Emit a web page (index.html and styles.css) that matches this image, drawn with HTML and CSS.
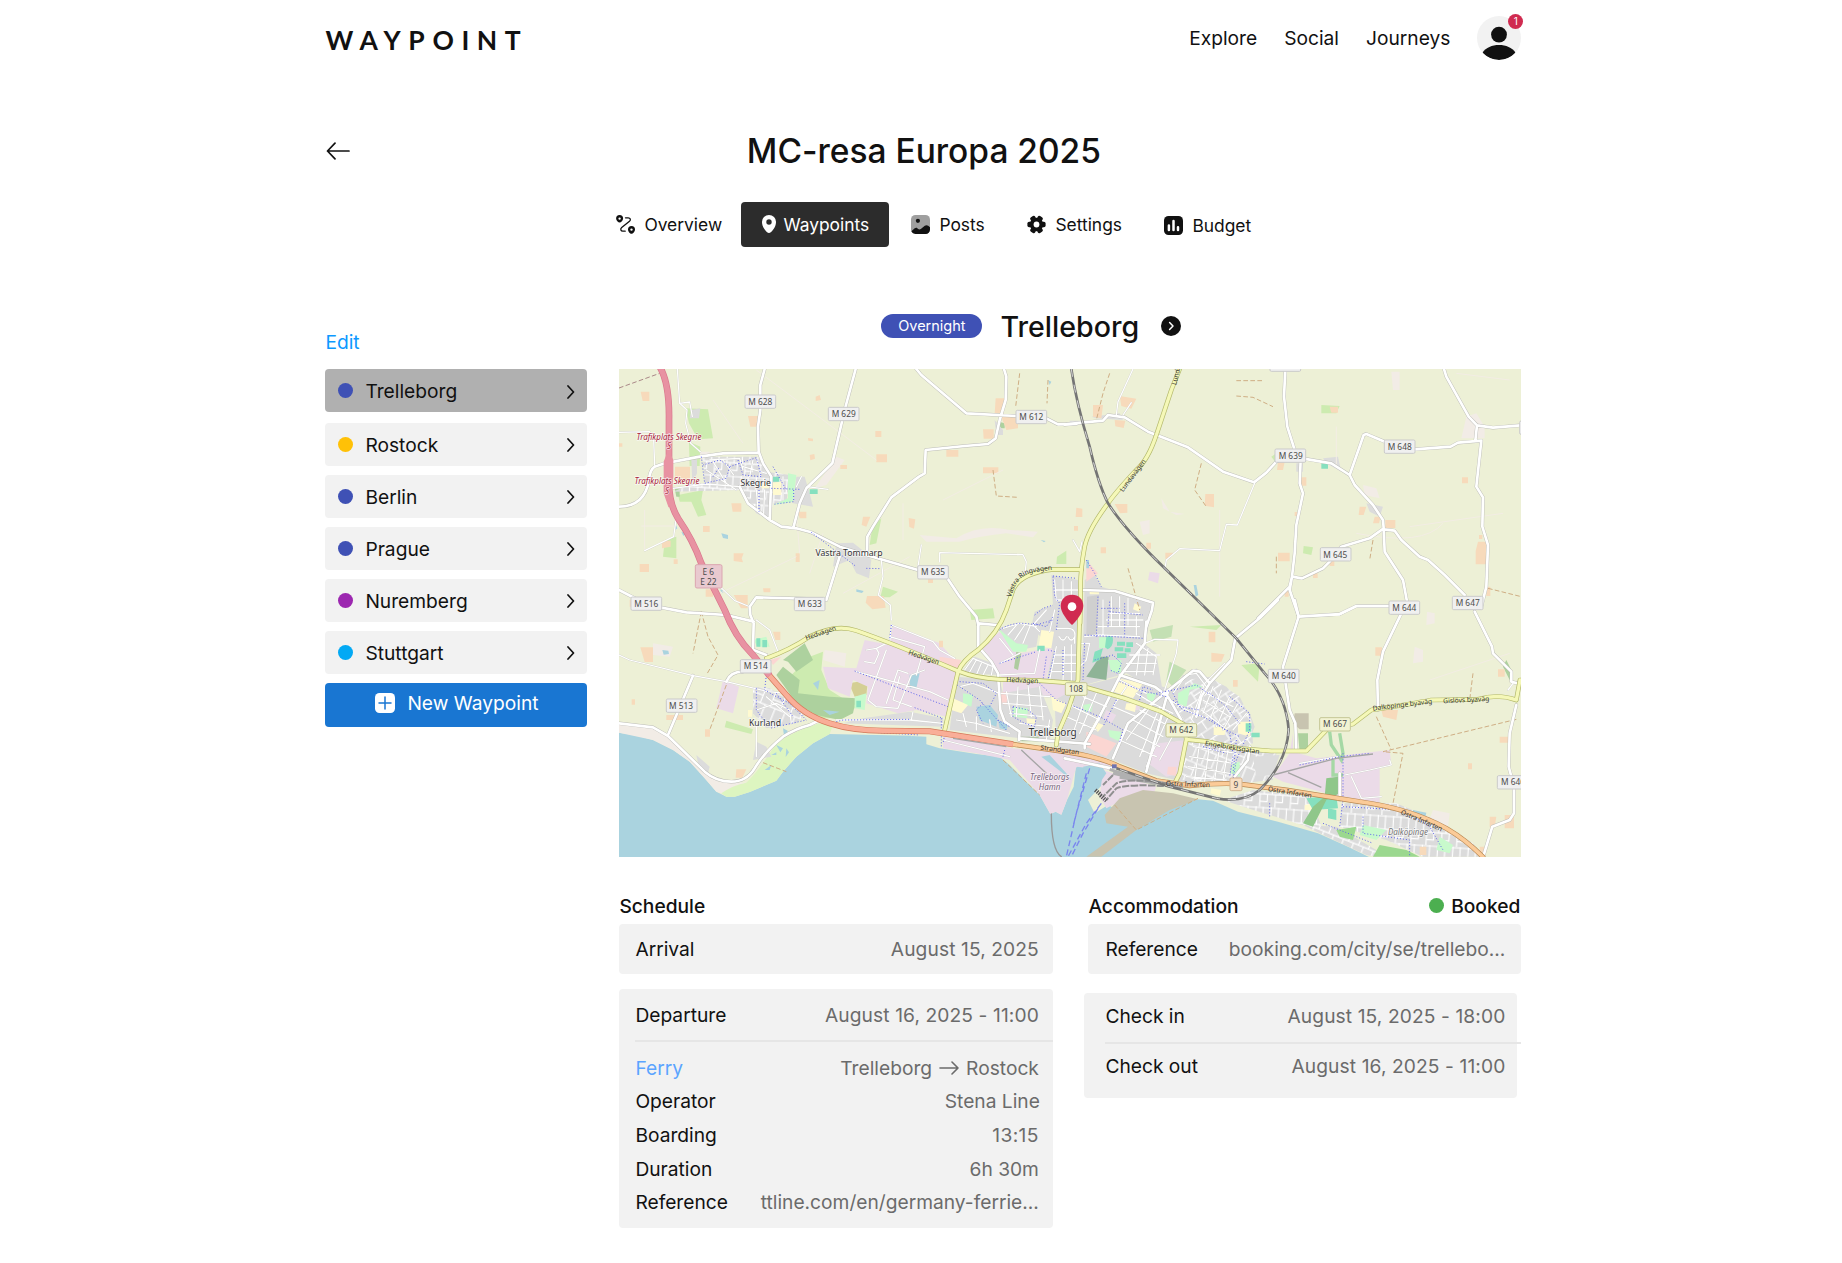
FILE: index.html
```html
<!DOCTYPE html>
<html lang="en">
<head>
<meta charset="utf-8">
<title>Waypoint – MC-resa Europa 2025</title>
<link rel="stylesheet" href="styles.css">
</head>
<body>
<div class="page">
  <header class="topbar">
    <a class="logo">WAYPOINT</a>
    <nav class="nav">
      <a>Explore</a><a>Social</a><a>Journeys</a>
      <div class="avatar">
        <svg viewBox="0 0 44 44" width="44" height="44">
          <defs><clipPath id="av"><circle cx="22" cy="22" r="22"/></clipPath></defs>
          <circle cx="22" cy="22" r="22" fill="#f2f2f2"/>
          <circle cx="22" cy="18.6" r="7.9" fill="#111"/>
          <path clip-path="url(#av)" d="M5.5 36.6C9 31.500 15 29 22 29s13 2.500 16.500 7.600C35 41.500 29 44 22 44S9 41.500 5.500 36.600z" fill="#111"/>
        </svg>
        <span class="badge">1</span>
      </div>
    </nav>
  </header>

  <div class="title-row">
    <svg class="back" viewBox="0 0 24 18" width="24" height="18" fill="none" stroke="#111" stroke-width="1.7" stroke-linecap="round" stroke-linejoin="round"><path d="M23 9H1.500M9 1.200L1.500 9 9 16.800"/></svg>
    <h1>MC-resa Europa 2025</h1>
  </div>

  <nav class="tabs">
    <a class="tab t-overview">
      <svg viewBox="0 0 19 19" width="19" height="19"><path d="M9.500 2.800h2.700c2.200 0 2.900 2 1.300 3.400L5.700 12.600c-1.700 1.500-.9 3.600 1.200 3.600h2.300" fill="none" stroke="#111" stroke-width="1.300" stroke-linecap="round"/><path fill-rule="evenodd" fill="#111" d="M3.600 0a3.500 3.500 0 0 1 3.500 3.500C7.100 5.600 5 7.600 3.600 7.600S.1 5.600.1 3.500A3.500 3.500 0 0 1 3.600 0zm0 2.400a1.200 1.200 0 1 0 0 2.400 1.200 1.200 0 0 0 0-2.400zM15.500 11a3.500 3.500 0 0 1 3.500 3.500c0 2.100-2.100 4.300-3.500 4.300S12 16.600 12 14.500a3.500 3.500 0 0 1 3.500-3.500zm0 2.400a1.200 1.200 0 1 0 0 2.400 1.200 1.200 0 0 0 0-2.400z"/></svg>
      <span>Overview</span></a>
    <a class="tab t-waypoints">
      <svg viewBox="0 0 14 18" width="14" height="18"><path fill-rule="evenodd" fill="#fff" d="M7 0a7 7 0 0 1 7 7.200C14 11.800 9.500 18 7 18S0 11.800 0 7.200A7 7 0 0 1 7 0zm0 4.300a2.700 2.700 0 1 0 0 5.400 2.700 2.700 0 0 0 0-5.400z"/></svg>
      <span>Waypoints</span></a>
    <a class="tab t-posts">
      <svg viewBox="0 0 19 19" width="19" height="19"><rect width="19" height="19" rx="4.500" fill="#9f9f9f"/><circle cx="6.900" cy="5.800" r="2.100" fill="#111"/><path d="M.4 16.200L3.700 13.300c.8-.7 1.900-.7 2.600-.1l.9.800c.8.600 1.800.5 2.600-.1l4-3.100c1-.8 2.400-.8 3.400 0l1.800 1.500v2.200c0 2.500-2 4.500-4.500 4.500h-10A4.500 4.500 0 0 1 .4 16.200z" fill="#111"/></svg>
      <span>Posts</span></a>
    <a class="tab t-settings">
      <svg viewBox="0 0 19 19" width="19" height="19"><g fill="#111"><circle cx="9.500" cy="9.500" r="6.700"/><rect x="6.700" y=".4" width="5.600" height="18.200" rx="1.700" transform="rotate(30 9.500 9.500)"/><rect x="6.700" y=".4" width="5.600" height="18.200" rx="1.700" transform="rotate(90 9.500 9.500)"/><rect x="6.700" y=".4" width="5.600" height="18.200" rx="1.700" transform="rotate(150 9.500 9.500)"/></g><circle cx="9.500" cy="9.500" r="2.900" fill="#fff"/></svg>
      <span>Settings</span></a>
    <a class="tab t-budget">
      <svg viewBox="0 0 19 19" width="19" height="19"><rect width="19" height="19" rx="4.500" fill="#111"/><path d="M4.900 9.500v4.600M9.500 5v9.100M14 11.200v2.900" stroke="#fff" stroke-width="2.500" stroke-linecap="round"/></svg>
      <span>Budget</span></a>
  </nav>

  <main class="content">
    <aside class="side">
      <a class="edit">Edit</a>
      <a class="item active"><i class="dot indigo"></i><span>Trelleborg</span><svg viewBox="0 0 8 14" width="8" height="14"><path d="M1 1l5.500 6L1 13"/></svg></a>
      <a class="item"><i class="dot amber"></i><span>Rostock</span><svg viewBox="0 0 8 14" width="8" height="14"><path d="M1 1l5.500 6L1 13"/></svg></a>
      <a class="item"><i class="dot indigo"></i><span>Berlin</span><svg viewBox="0 0 8 14" width="8" height="14"><path d="M1 1l5.500 6L1 13"/></svg></a>
      <a class="item"><i class="dot indigo"></i><span>Prague</span><svg viewBox="0 0 8 14" width="8" height="14"><path d="M1 1l5.500 6L1 13"/></svg></a>
      <a class="item"><i class="dot purple"></i><span>Nuremberg</span><svg viewBox="0 0 8 14" width="8" height="14"><path d="M1 1l5.500 6L1 13"/></svg></a>
      <a class="item"><i class="dot sky"></i><span>Stuttgart</span><svg viewBox="0 0 8 14" width="8" height="14"><path d="M1 1l5.500 6L1 13"/></svg></a>
      <a class="new"><svg viewBox="0 0 20 20" width="20" height="20"><rect width="20" height="20" rx="4.500" fill="#fff"/><path d="M10 4v12M4 10h12" stroke="#1976d2" stroke-width="1.500" stroke-linecap="round"/></svg><span>New Waypoint</span></a>
    </aside>

    <section class="detail">
      <div class="place">
        <span class="pill">Overnight</span>
        <h2>Trelleborg</h2>
        <svg viewBox="0 0 20 20" width="20" height="20"><circle cx="10" cy="10" r="10" fill="#111"/><path d="M8.600 6.500L12 10l-3.400 3.500" fill="none" stroke="#fff" stroke-width="1.500" stroke-linecap="round" stroke-linejoin="round"/></svg>
      </div>

      <svg class="map" viewBox="28 27 2706 1464" preserveAspectRatio="none">
        <defs>
          <pattern id="streetsA" width="64" height="92" patternUnits="userSpaceOnUse" patternTransform="rotate(22)"><rect width="64" height="92" fill="#dbdbdb"/><path d="M0 3H64M4 0V48M36 3V48M0 48H64M20 48V92M52 48V92M4 24H36" stroke="#fff" stroke-width="3.500"/></pattern>
          <pattern id="streetsB" width="84" height="60" patternUnits="userSpaceOnUse" patternTransform="rotate(-34)"><rect width="84" height="60" fill="#dbdbdb"/><path d="M0 3H84M4 0V32M48 0V32M0 32H84M26 32V60M66 32V60M48 16H84" stroke="#fff" stroke-width="3.500"/></pattern>
          <pattern id="streetsC" width="46" height="80" patternUnits="userSpaceOnUse" patternTransform="rotate(4)"><rect width="46" height="80" fill="#dbdbdb"/><path d="M0 3H46M4 0V42M26 0V42M0 42H46M14 42V80M36 42V64H14" fill="none" stroke="#fff" stroke-width="3.500"/></pattern>

          <g id="minor">
            <path d="M203 27L210 130L232 150L228 190L243 250L272 275M210 130L240 126L248 170M28 217L120 215L132 240L135 315M190 385L290 372L390 380M200 470L192 530L105 572M815 600L820 650L806 705L842 735L845 780M990 606L990 578L1240 584L1250 605L1246 640M935 555L925 620M592 380L655 388M331 680L375 722L415 738M300 300L390 295L400 330M290 330L380 390M310 305L350 370M340 300L372 345M400 320L470 340M430 300L420 350M440 390L445 450M465 390L462 460M520 350L520 420M575 350L560 380"/>
            <g transform="translate(1365)"><path d="M205 27L160 125L155 165M200 128L175 165M570 370L518 495L485 493L465 572L345 566L305 600L300 630M25 540L45 575L52 545M700 770L825 765L875 740L975 740"/></g>
            <g transform="translate(0 720)"><path d="M28 165L60 180L250 227L350 245L475 275L530 280M440 60L480 90L505 155M440 370L440 470M845 75L840 130M845 75L970 125L990 150L1035 175M740 215L960 275L1015 300M800 145L830 130M830 150L775 300L800 320L865 325L905 225L945 210M840 110L945 140L920 225M895 220L865 210L830 310M770 150L800 145L808 160L795 190L765 185M870 230L850 300L905 320M680 360L900 360L1000 370M910 335L905 360M1000 420L1200 470M440 330L500 310L540 330L545 370M470 290L540 350"/></g>
            <g transform="translate(1365 720)"><path d="M240 130L270 118L340 120L335 160L300 270M840 525L915 510L980 495L975 480M860 530L890 595L950 590M705 490L820 470M1330 270L1345 250M1340 245L1365 250M380 360L420 250L480 190"/></g>
            <!-- town streets -->
            <g transform="translate(990 600)"><path d="M345 60L350 120H415M370 60V120M395 65V120M345 90H415M320 150L280 195L300 215M345 150L330 215M350 205H385Q410 205 405 235V250M358 230Q370 250 380 230M385 230Q395 250 405 230M350 260L330 360M375 260L370 360M395 255V365M345 285H410M340 310H410M335 335H410M190 205L240 190L290 200M205 225L235 190M225 240L255 195M250 250L270 200M75 330L100 295L160 320L155 345M85 345L110 300M110 345L125 310M130 345L145 315M180 310L240 280M180 235L220 285M300 270L285 340L180 345M435 230L480 225L600 230M475 200H600M490 120V225M515 110V200M540 110V200M565 115V195M590 170V225M500 180H610M505 160H600M590 250L650 290M570 285H660M560 310H650M550 335H640M600 270L590 345M625 265L615 345M650 290L640 345M425 250H450L440 300L420 320"/>
              <path d="M185 400L330 410M190 430L320 440M210 460L310 470M200 395L215 470M235 380L230 470M265 375L275 470M300 380L310 480M60 380L100 370L180 400M50 480L110 490L210 520M70 460L80 500M110 470V510M150 480L155 515M330 480L320 540M240 490L330 500M380 470L470 510M400 440L480 480M430 410L500 440M400 430L370 500M440 400L400 520M470 400L420 520M500 430L450 520M560 380L520 440L590 470M540 360L620 400M590 400L640 430L560 540M620 420L700 460M600 450L690 500M580 480L670 530M560 510L660 560M540 540L650 590M660 440L600 590M690 460L620 620M725 480L660 600"/>
              <path d="M700 400L740 345L770 340L800 380M690 420L760 460L790 470M800 400L880 440M790 420L870 470M785 450L850 500M820 380L790 460M845 390L810 480M870 410L830 500M895 430L850 510M920 460L880 510M760 560L890 580M750 590L880 610M745 620L870 640M740 650L860 660M780 545L765 660M810 550L795 665M840 560L825 660M865 570L850 660"/></g>
          </g>
          <g id="local">
            <path d="M465 27L452 75L452 150L445 200L447 275L460 310L485 350L480 480M738 27L705 150L668 310L590 385L570 430L552 500M920 27L935 45L1070 160L1220 168L1310 175L1345 193L1400 192M1183 27L1190 50L1188 120L1170 180L1158 235L1135 252L1065 258L948 270L945 340L928 350L845 412L790 500L773 530L772 580M135 320L165 310L270 290L340 280L447 278M135 320Q120 330 118 360Q105 440 28 440M390 380L415 430L480 480L515 500L560 505L605 517L690 560L770 585L925 630L1010 650L1050 710L1100 770L1106 795M690 590L650 720L620 717L440 712L420 740L422 765L432 790L430 865M28 690L115 735L230 757L350 765L432 785"/>
            <g transform="translate(1365)"><path d="M0 194L50 188L115 182L130 165L180 172L250 215L370 262L475 335L568 367L605 338L635 305L665 290L730 298L800 310L855 345L870 375L925 435L955 480L957 505L915 535L830 560L795 605L775 625L712 655L682 650L675 680L580 775M662 30L658 110L668 200L690 270L708 300L705 370L715 400L695 495L690 580L682 650L675 690L702 770M855 345L897 225L905 222L960 245L1050 268L1158 260L1180 248L1250 242L1235 380L1255 412L1253 500L1270 555L1265 680L1250 740M1138 27L1145 50L1212 170L1237 196L1285 203L1368 196M1237 196L1232 242M957 505L960 575L1015 660L1028 730M957 508L990 512L1010 540L1065 590L1090 600L1140 645L1200 705M50 690L150 693L265 728L262 750L245 800"/></g>
            <g transform="translate(0 720)"><path d="M250 227L175 405M28 370L130 382L175 408L285 515Q320 545 365 545Q410 545 435 505Q465 455 520 410Q560 385 600 375L630 360M350 245Q362 215 400 215M432 150L470 165M1106 70L1160 75M1106 70L1106 140L1145 185L1165 220L1172 330L1185 365L1230 395L1228 420M1228 415L1440 432"/></g>
            <g transform="translate(1365 720)"><path d="M702 50L690 0M640 0L590 50L512 115L500 180L435 250L410 290L395 350M702 50L655 200L675 330L692 370L695 450M702 50L825 42L875 18L975 18M1010 40L955 155L938 240L940 330M1230 35L1282 140L1285 160L1340 215L1340 245L1365 252M1355 315L1335 400L1332 500L1348 560V640L1335 660L1283 680L1255 772M245 65L240 130L165 230L100 360L60 430V445M165 225L270 260L310 290L350 360M435 250L405 215L385 212L300 280L190 370L145 475M555 440L550 480L510 530M825 520V600M0 475L140 505M310 275L245 515"/></g>
          </g>
          <g id="second">
            <g transform="translate(1365)"><path d="M345 27L320 90L275 225Q250 300 215 330Q150 400 130 430Q70 510 60 560Q45 640 48 700L46 790"/></g>
            <path d="M1415 629L1330 628Q1230 640 1210 690L1190 750Q1165 820 1105 870Q1060 900 1045 935L1003 1120"/>
            <g transform="translate(0 720)"><path d="M470 175Q540 150 600 110Q680 70 740 92Q850 130 1045 213Q1100 235 1170 238L1290 242L1400 250"/></g>
            <g transform="translate(1365 720)"><path d="M46 0L40 240L10 330L-20 400L-25 435M40 255L180 295L290 335L360 375L365 418L345 520L330 550M365 418L430 425L520 445L620 453L725 453L790 385L865 372L920 330Q1050 310 1100 300L1240 298Q1300 280 1355 300L1366 240"/></g>
          </g>
          <path id="coastroad" d="M1210 1153L1365 1175Q1470 1190 1530 1220L1640 1262L1740 1277Q1830 1268 1890 1272L2030 1290L2250 1325Q2400 1345 2510 1405Q2570 1440 2620 1491"/>
          <path id="trunk" d="M475 942L530 1005Q580 1065 660 1090Q730 1112 820 1112L960 1114L1210 1153"/>
          <path id="motorway" d="M150 20Q180 70 178 180V370Q178 430 205 475Q250 540 275 610L345 750Q375 830 430 885L480 947"/>
          <path id="rail" d="M1385 27Q1400 130 1440 260Q1465 370 1495 430Q1540 500 1640 600L1880 835L1965 940Q2030 1010 2037 1110Q2030 1210 1950 1290Q1900 1330 1820 1315L1680 1280L1520 1225"/>
          <path id="ringPath" d="M1204 712Q1222 650 1262 640Q1300 630 1360 628"/>
        </defs>

        <rect x="28" y="27" width="2706" height="1464" fill="#edf0d6"/>

        <!-- sea -->
        <path fill="#aad3df" d="M28 1118L75 1125L130 1140L190 1170L240 1205L285 1255L320 1295L350 1310H375L420 1296L500 1262L520 1235L560 1190L610 1150L660 1122L905 1127L908 1140L990 1165L1100 1182L1170 1190L1200 1215L1250 1265L1290 1305L1322 1362L1338 1355L1355 1364L1372 1320L1392 1280L1398 1225L1420 1200L1480 1235L1482 1270L1435 1320L1455 1360L1495 1335L1560 1370L1765 1318L1810 1322L1885 1355L2005 1385L2125 1420L2215 1460L2280 1492H28z"/>
        <!-- beach and parks -->
        <path fill="#f2ece6" d="M28 1092L130 1105L200 1145L290 1240L330 1265L410 1268L335 1300L320 1295L285 1255L240 1205L190 1170L130 1140L28 1118z"/>
        <path fill="#ddf5c0" d="M335 1300Q370 1275 410 1268Q450 1230 500 1150Q560 1110 630 1090L668 1100L660 1122L610 1150L560 1190L520 1235L500 1262L420 1296L375 1310H350z"/>
        <path fill="#cdebb0" d="M600 890L640 875L635 930L660 990L740 1040L700 1075H640L570 1040L540 950zM228 145L295 148L310 235L265 238L238 190zM238 245L272 260L270 318H240zM205 405L280 390L275 420L290 465L265 470L245 425L210 425zM165 540L200 530L200 595L160 590zM350 1082L430 1108L425 1122L345 1102zM788 500L815 475L800 550L780 555zM820 680L865 695L840 712H812zM2135 135L2190 138L2180 160H2135zM2082 558L2110 562L2105 585L2080 580zM1985 290L2000 280V310zM1835 795L1820 810L1740 800zM1895 915L1950 910L1945 965zM1080 750L1150 745L1155 775L1085 780z"/>
        <path fill="#add19e" d="M520 900L585 850L610 900L560 935L535 905zM500 945L520 920L570 960L565 1000L660 1010L740 1015L730 1060L690 1080L620 1065L560 1030zM2065 1120H2095V1170L2070 1180zM195 385H210V410H200zM1168 185L1185 190V205H1168zM2690 900L2710 940L2700 960L2680 920z"/>
        <path fill="#c4e0b4" d="M1620 810L1690 795L1685 830L1630 845zM1680 905L1730 930L1690 980L1670 960z"/>
        <path fill="#d4cf94" d="M718 970L775 960L770 1005L735 1010z"/>
        <path fill="#c8c4b0" d="M2055 1060H2097V1108H2070L2050 1090z"/>
        <path fill="#f2ece6" d="M930 525L1040 535Q1110 490 1200 510L1285 515L1270 532L1190 520Q1100 530 1050 545L950 545zM680 290L705 300L650 375L615 385zM645 870L710 880L705 920L640 900zM270 275H300V300H275zM2570 170L2600 160L2625 200V235H2555zM2470 1350L2520 1360L2515 1400L2455 1390zM1655 415L1680 455L1725 462L1700 465L1660 445zM130 850L190 860L180 890L130 885zM2345 35H2370V90H2350zM1590 485L1620 480V520L1600 525zM2260 375L2300 385L2310 415L2265 405zM2415 860L2440 870V905L2410 910zM2452 755L2475 760V790L2450 795z"/>
        <!-- industrial -->
        <g fill="#ebdbe8">
          <path d="M850 795L990 850L1035 900L1050 930L1040 940L1010 1070L920 1050L865 1060L770 1030L775 980L730 960L720 1010L655 985L640 920L740 925L765 840L840 855zM340 960L388 980L370 1060L320 1045zM1000 1130L1210 1165L1480 1190L1520 1215L1500 1230L1400 1220L1372 1320L1355 1364L1338 1355L1322 1362L1290 1305L1200 1200L1100 1180L1000 1165z"/>
          <path d="M1170 815L1230 880L1340 860L1310 950L1400 965L1380 1060L1330 1010L1180 1000V960L1150 905L1115 860z"/>
          <path d="M2050 1120V1175L2120 1195L2340 1170L2345 1215L2310 1220V1330L2190 1310L2020 1265L1990 1250L2040 1180zM1480 1230L1640 1280L1620 1330L1520 1330L1490 1345L1470 1310zM1620 635L1650 640L1645 670L1615 660z"/>
        </g>
        <!-- built-up areas -->
        <g>
          <path fill="url(#streetsC)" d="M280 290L385 290L445 290L470 335L540 345L530 430L490 430L480 480L440 460L395 390L190 395L250 370L285 370z"/>
          <path fill="#dcdcdc" d="M560 350L585 350L600 400L610 440L550 430zM680 550L730 548L770 580L785 600L778 655L740 640L720 600L670 620zM245 150L272 145L268 175H240zM245 300L262 298V340L248 370zM440 1145L470 1160L485 1190L430 1200zM260 1185L300 1220L295 1240L265 1210zM1155 180L1180 210V225L1160 225zM1445 170L1530 160L1540 180L1460 175zM2140 295L2185 290L2195 335L2150 310zM2270 430L2320 440L2310 470L2280 455zM1380 182H1420V192H1380zM2060 310L2080 310V335H2060z"/>
          <path fill="url(#streetsA)" d="M430 980L480 985L540 1020L590 1060L560 1090L470 1105L430 1060z"/>
          <g fill="#dbdbdb" transform="translate(990 600)">
            <path d="M335 45L415 60V365H320L340 270L275 200L285 155L340 135zM435 60L465 45L485 80L640 125L620 235L560 340L435 375L415 360L430 260zM175 205L230 190L300 200L290 260L240 270zM65 340L105 290L160 310L180 345zM50 350L180 360L190 400L300 380L340 480L330 545L30 510zM345 420L400 390L420 380L560 345L700 390L730 345L790 345L860 380L930 460L945 500L920 560L930 640L750 670L620 640L520 600L350 560zM560 340L600 240L650 280L670 400z"/>
            <path d="M690 390L770 325L830 400L760 480L720 480z"/>
          </g>
          <path fill="url(#streetsB)" d="M1730 960L1800 950L1890 1010L1925 1080L1930 1150L1900 1160L1760 1130L1700 1050z"/>
          <path fill="url(#streetsA)" d="M1740 1140L1920 1160L2000 1180L1990 1260L1900 1270L1710 1260z"/>
          <path fill="url(#streetsC)" d="M1930 1290L2100 1310L2140 1410L2060 1390L1900 1340L1840 1320zM2195 1330L2360 1330L2480 1380L2590 1450L2620 1490L2440 1490L2330 1440L2190 1400z"/>
          <path fill="url(#streetsA)" d="M2080 1395L2180 1400L2300 1470V1490L2270 1485L2130 1420z"/>
          <path fill="#dcdcdc" d="M1930 1190L2010 1185L1990 1245L1940 1250zM900 1055L1000 1075L1000 1100L700 1090L760 1075z"/>
          <path fill="#cfcfcf" d="M1432 710L1468 705L1460 820L1430 830z"/>
        </g>
        <g transform="translate(990 600)">
          <path fill="#ebdbe8" d="M655 550L740 540L725 640L680 650L625 610zM500 450L530 465L515 490L490 475zM580 430h20v20h-20z"/>
          <path fill="#fbd6d2" d="M0 290L65 300L55 325L0 310zM185 395L205 398L200 435L182 430zM440 515L530 550L500 590L440 560zM440 0L475 40L440 65zM685 620h25v28l-28-5z"/>
          <path fill="#8fb497" d="M480 290L507 290L500 360L440 350z"/>
          <path fill="#aecb9f" d="M245 530h52v14h-52zM230 275l15 5-10 50-12-5z"/>
          <path fill="#c8facc" d="M175 205L230 250L265 255L260 275L220 275zM220 440L265 445L262 475L220 470zM70 400L100 405L95 440L70 430zM505 510L545 515L540 545L510 530zM715 400L765 370L790 380L750 390L740 440L715 430zM880 610L900 605V650L872 640zM620 400L650 400L640 425H625zM430 435L460 430L455 455H435zM478 232h22v32h-22zM505 300L545 300V340L515 335z"/>
          <path fill="#fffad0" d="M305 210L343 215L335 265L297 258zM40 415L85 435L65 460L35 450zM335 410L380 430L365 460L340 450zM535 355L610 370L580 415L522 395zM560 430h30l-4 26-30-8zM465 485L492 495L475 515L455 505zM822 500L860 500L855 525H822zM585 130L605 140L598 155L580 148zM260 475L288 478L285 492L262 490zM450 95h28v8h-28z"/>
          <path fill="#aad3df" d="M110 440L150 435L175 465L170 500L120 480zM175 480L205 495L200 510L180 505zM305 590L330 585L380 640L395 660L370 640zM440 0h8v25h-8zM762 75h8l6 30-8 5z"/>
        </g>
        <!-- harbour flats -->
        <path fill="#c8c4b0" d="M1485 1365L1530 1315L1600 1290L1690 1300L1765 1318L1680 1350L1580 1410L1475 1490H1430L1555 1400L1490 1390z"/>
        <path fill="#aad3df" d="M900 945L930 940L920 985L900 985zM905 1128L950 1130V1155L905 1142zM610 970L630 960L625 990zM2410 1350L2450 1358L2445 1380L2405 1370zM640 1050L690 1055L660 1065zM1420 1220L1470 1210L1490 1240L1450 1300z"/>
        <path fill="#aad3df" d="M335 520l20 5v12l-15-3zM740 688l22 5-5 6-17-4zM158 870l18 2 2 10-16 2zM195 485l8 20-6 5zM215 515l12 5-6 8zM1315 60l10 5-5 10zM1293 540l15 3-5 4zM330 688l14 6-6 6zM520 1105l15 8-12 15zM500 1155l20 10-8 12zM485 1185l15-8v8zM465 1230l20-15-5 15zM530 1165l8 12-10 14z"/>
        <!-- schools, pitches and shops -->
        <path fill="#fffad0" d="M460 370L515 365V405H490V385H455zM1885 1085L1925 1085L1920 1130L1885 1120zM1805 1285L1835 1290L1830 1308L1802 1300zM2085 1335L2110 1330L2105 1350H2085zM2270 1405H2290V1425H2270zM415 1050h12v20h-12z"/>
        <path fill="#fbd6d2" d="M480 900L515 890L490 915z"/>
        <path fill="#c8facc" d="M535 340L560 345L550 425L490 435L535 415zM430 840L470 830L480 860L445 860zM735 1010L770 1000L765 1050L735 1045zM2260 1395L2330 1410L2300 1440L2250 1425zM2490 1430L2530 1455L2520 1480L2480 1470z"/>
        <path fill="#86e0bf" d="M485 350h24v15h-24zM600 388h24v14h-24zM440 835h12v25h-12zM458 840h14v22h-14zM740 1022h14v20h-14zM1283 857h22v16h-22zM1522 845h24v12h-24zM1550 847h20v14h-20zM1515 862h26v12h-26zM1545 865h18v12h-18zM1522 880h28v14h-28zM1490 830q20-8 20 10q0 20-16 28l-8-6zM1455 875l25-10-10 35-22 8zM2135 310h20v16h-20zM1908 1090h17v25h-17zM1925 1118h25v14h-25zM2090 1315L2180 1305L2185 1345L2110 1350zM2155 1345L2180 1350V1380L2155 1375z"/>
        <path fill="none" stroke="#a5d8a5" stroke-width="10" d="M2160 1115L2165 1155L2195 1200L2200 1180L2190 1120M2170 1200V1245H2200"/>
        <path fill="#8fc78a" d="M2150 1255L2185 1250L2190 1300L2150 1320L2110 1400L2080 1390L2110 1340L2145 1310z"/>
        <path fill="#9bd88f" d="M2310 1455L2390 1470L2430 1490H2290zM2180 1410L2240 1400L2230 1440L2190 1430z"/>
        <!-- farmyards -->
        <path fill="#f7dabb" d="M93 95h26v28h-20zM415 168h32v32h-25zM618 110l12-5 4 15-16 3zM196 320h45v50h-35l-10-20zM365 430h30v25h-26zM565 455h25v20h-20zM600 285l14-3 2 14-14 5zM595 234l15 2v8l-14-2zM692 315h20v12h-20zM797 213h18v18h-18zM800 283h32v24h-32zM1010 270h36v20h-36zM1120 208h32v28h-30zM1158 115h25v45h-28zM1175 170h50v35l-35 5zM1120 322h46v18h-46zM760 470h22l-12 30-14-5zM897 474l20 4-4 28-14-5zM157 542h26v18l-26 5zM280 498h20v18h-20zM372 580h30l-6 15 4 12-28-4zM558 580h12v26h-12zM90 612h28v24h-28zM192 598h12v14h-12zM460 685h22v12h-20zM288 688h22v22h-22zM372 705h42v40h-20zM772 708h50l6 35-40 5-20-20zM955 655h15v14h-15zM92 862h38v44h-25zM66 1018h10v16h-10zM380 1228h30l-12 25h-20zM170 1065h50v15h-50zM286 1108h15v22h-15zM490 815h22v25h-15zM988 842h12v20h-12zM60 720h45v20h-45zM28 250h10v10h-10z"/>
        <path fill="#cdebb0" d="M1342 590L1370 572V612H1340z"/>
        <path fill="#f7dabb" transform="translate(1365)" d="M165 108l50 8-15 30-30-8zM85 135h30l-5 40-25-5zM150 180l32 2-5 22-25-5zM150 432h38v26l-22 2zM35 443l18 3v25h-20zM28 498h12v14h-12zM108 562h16v18h-16zM245 548h14v18h-14zM302 578h24l-10 18h-14zM422 402h26v40l-28-5zM640 305h20l-5 25h-18zM705 352h20v25h-15zM690 456h12v12h-12zM640 578h35v26h-35zM745 640h14v14h-14zM795 600h14v18h-14zM885 440h20l-8 25h-15zM930 470h18l-5 20h-18zM962 480h30v24h-30zM1192 352h18v18h-18zM1240 545h30l-5 68h-32v-40zM1243 525h10v12h-10zM795 140h25v18h-20zM1265 680h12v28h-12zM660 692h12v18h-12z"/>
        <path fill="#f7dabb" transform="translate(1365 720)" d="M432 95h20v32h-20zM440 158l40 5-10 22h-30zM505 240h14v20h-14zM932 142h20v25h-20zM950 330h50l-5 30-40-10zM1300 208h20v22h-20zM1210 490h12v18h-12zM1305 410h25v18h-25zM1275 650h20l-5 30h-15zM1320 645h28v40h-28zM1245 740h14v30h-14zM1065 740h20v25h-20z"/>

        <!-- hedges, tracks and boundaries -->
        <g fill="none" stroke="#f3ede4" stroke-width="3"><path d="M95 498h100M105 450v120M440 30L800 300M310 120L400 250M560 460L570 580M640 520L600 640M1000 420L1180 330M700 700L900 590M330 700L560 590M880 430v110M2180 200v120M2400 500L2680 460M2540 40L2700 60M2240 520Q2440 560 2500 490M1830 450v260M2460 960L2700 880"/></g>
        <g fill="none" stroke="#cfae84" stroke-width="3" stroke-dasharray="14 7">
          <path d="M28 84L150 40" stroke="#a88"/><path d="M1230 40L1218 140M1315 60L1312 130M1150 330L1160 408L1225 412M275 755L250 880M275 755L295 830L325 885L290 945M350 975L300 1110M1500 40L1480 100L1460 180M1880 62H1960M1880 108L1930 112L1990 140M1775 310L1755 390L1790 440M1555 625L1590 750M2000 590V640M2290 540L2280 600M2635 685L2735 710M2590 940L2580 1020M2720 1078L2320 1175L2380 1180L2350 1330M2300 1070L2345 1170M1515 1335L1580 1410L1765 1315M460 1208L530 1235M1180 1200L1290 1305"/>
        </g>

        <!-- roads -->
        <g fill="none" stroke-linejoin="round" stroke-linecap="round">
          <use href="#minor" stroke="#c9c9c4" stroke-width="5"/>
          <use href="#local" stroke="#bdbdb8" stroke-width="10.500"/>
          <use href="#minor" stroke="#fff" stroke-width="3.800"/>
          <use href="#local" stroke="#fff" stroke-width="8"/>
        </g>

        <!-- footpaths -->
        <g fill="none" stroke="#5d62ec" stroke-width="3" stroke-dasharray="3 6">
          <path d="M275 290L285 370L350 355L360 320L330 300L280 315M360 320L440 293L455 350L400 345L385 300M485 385L570 388M552 390V425L490 433M448 390V455M605 517L740 620M770 625L815 626M490 320L530 390M310 350L330 320"/>
          <path transform="translate(990 600)" d="M340 48L410 55M340 50L345 110L360 130L350 210M285 165L310 145L340 135M280 190L320 200L340 170M180 210Q220 180 290 195L340 180M440 0L465 40L485 80M435 250L430 360M475 110L470 230M510 125L505 200M555 130V230M485 145H540M510 155L610 165M435 225L610 235M325 270L345 275L325 360L410 365M370 270V350M180 310L290 275M320 290L310 360M465 300L520 285L545 310L535 340L510 330M650 400L700 390L770 375L805 400M540 365L600 390L680 410M60 365L130 370L170 400L150 440M45 370L120 420L200 510M130 430L110 450L130 490M175 480L210 500M220 440L265 450L290 470L285 500L255 490L220 470zM300 370L350 420L420 445L480 470L550 510L540 545M530 420L490 500M700 420L730 450L790 470L860 510L900 530M700 400L720 440L780 450M810 400L860 440L900 490M880 590L870 650M890 540L880 640M790 560L860 580M600 420L610 380L640 390M15 525L10 550M195 570L190 590"/>
          <path d="M845 795L840 840M735 933L1015 1040M915 1043L1000 1075M680 1100L760 1115L930 1125M680 1085L700 1080L900 1078M470 945L465 990L500 1010L540 1030L590 1080L480 1105M500 1000L550 1070M440 985V1050L470 1090M995 1075V1160"/>
          <path d="M1860 1010L1920 1060V1110L1880 1200L1870 1260M1800 1075L1860 1120L1870 1180M2200 1180V1320L2190 1400M2070 1215L2190 1190L2280 1180M1980 1330V1370M2200 1340L2380 1350L2460 1400L2500 1470M2140 1390L2290 1450M2260 1370V1420L2400 1440V1490M1910 905L1965 912"/>
        </g>
        <g fill="none" stroke="#7a85ee" stroke-width="4" stroke-dasharray="18 10"><path d="M1440 1225L1400 1360L1370 1490M1475 1330L1430 1390L1375 1490M1465 1345L1420 1420L1385 1490M1430 1240L1390 1400"/></g>

        <!-- main roads and railway -->
        <g fill="none" stroke-linejoin="round" stroke-linecap="round">
          <use href="#second" stroke="#b3b86a" stroke-width="14"/>
          <use href="#second" stroke="#f5f8b8" stroke-width="10"/>
          <use href="#coastroad" stroke="#b98750" stroke-width="15"/>
          <use href="#coastroad" stroke="#fbcb98" stroke-width="11"/>
          <g stroke-linecap="butt">
            <use href="#trunk" stroke="#d57858" stroke-width="18"/>
            <use href="#trunk" stroke="#f9ae98" stroke-width="14"/>
            <use href="#motorway" stroke="#d9768c" stroke-width="20"/>
            <use href="#motorway" stroke="#e892a2" stroke-width="16"/>
            <path d="M176 275L164 305V400L178 440L189 350V300z" stroke="#e892a2" fill="#e892a2" stroke-width="4"/>
            <path d="M1500 1228Q1560 1250 1690 1275M1510 1240L1600 1260L1720 1285M1530 1252L1640 1270" stroke="#b0b0b0" stroke-width="9"/>
            <path d="M1680 1272Q1560 1252 1520 1270L1480 1310M1690 1280Q1560 1270 1520 1285L1490 1320M1510 1245L1480 1275" stroke="#8f8f8f" stroke-width="6" stroke-dasharray="22 4"/>
            <use href="#rail" stroke="#757575" stroke-width="8"/>
            <use href="#rail" stroke="#d8d8d8" stroke-width="3" stroke-dasharray="24 24"/>
            <path d="M1235 1170L1310 1240M1030 1135L1190 1160M1990 1245L2180 1195L2290 1182M2035 1238L2135 1282" stroke="#a5a5a5" stroke-width="4"/>
            <path d="M1457 1290l16 14M1472 1306l18 16" stroke="#555" stroke-width="12" stroke-dasharray="4 3"/>
          </g>
          <path d="M1325 1362Q1325 1470 1355 1490" stroke="#999" stroke-width="4"/>
        </g>
        <rect x="1507" y="1213" width="14" height="12" fill="#6f74b0"/>

        <!-- road numbers -->
        <g class="shield">
          <g class="sh-w"><rect x="406" y="105" width="92" height="40" rx="4"/><rect x="656" y="142" width="92" height="40" rx="4"/><rect x="1219" y="151" width="92" height="40" rx="4"/><rect x="924" y="617" width="92" height="40" rx="4"/><rect x="64" y="711" width="92" height="40" rx="4"/><rect x="554" y="712" width="92" height="40" rx="4"/><rect x="392" y="899" width="92" height="40" rx="4"/><rect x="170" y="1017" width="92" height="40" rx="4"/><rect x="1996" y="267" width="92" height="40" rx="4"/><rect x="2324" y="240" width="92" height="40" rx="4"/><rect x="2132" y="563" width="92" height="40" rx="4"/><rect x="2338" y="723" width="92" height="40" rx="4"/><rect x="2528" y="709" width="92" height="40" rx="4"/><rect x="1976" y="928" width="92" height="40" rx="4"/><rect x="2663" y="1247" width="92" height="40" rx="4"/><rect x="1981" y="-6" width="92" height="40" rx="4"/><rect x="2730" y="183" width="40" height="40" rx="4"/></g>
          <g class="sh-y"><rect x="1367" y="968" width="65" height="38" rx="4"/><rect x="1669" y="1091" width="92" height="40" rx="4"/><rect x="2130" y="1073" width="92" height="40" rx="4"/></g>
          <rect x="1861" y="1254" width="36" height="38" rx="4" fill="#f8dfc4" stroke="#d3b591" stroke-width="3"/>
          <rect x="257" y="614" width="80" height="70" rx="5" fill="#e9c9cf" stroke="#dba5b0" stroke-width="3"/>
          <text x="452" y="135">M 628</text><text x="702" y="171">M 629</text><text x="1265" y="180">M 612</text><text x="970" y="646">M 635</text><text x="110" y="741">M 516</text><text x="600" y="741">M 633</text><text x="438" y="928">M 514</text><text x="214" y="1047">M 513</text><text x="2043" y="297">M 639</text><text x="2370" y="270">M 648</text><text x="2177" y="593">M 645</text><text x="2384" y="752">M 644</text><text x="2574" y="738">M 647</text><text x="2022" y="957">M 640</text><text x="2710" y="1276">M 646</text>
          <text x="1399" y="996" fill="#555a30">108</text><text x="1715" y="1120" fill="#555a30">M 642</text><text x="2176" y="1102" fill="#555a30">M 667</text><text x="1879" y="1283" fill="#6b4a2a">9</text><text x="296" y="645" fill="#8d2b48">E 6</text><text x="296" y="674" fill="#8d2b48">E 22</text>
        </g>
        <!-- places -->
        <g class="place-name"><text x="438" y="377">Skegrie</text><text x="718" y="589">Västra Tommarp</text><text x="466" y="1098">Kurland</text><text class="town" x="1329" y="1127">Trelleborg</text></g>
        <g class="junction"><text x="178" y="239">Trafikplats Skegrie</text><text x="178" y="266">S</text><text x="172" y="373">Trafikplats Skegrie</text><text x="172" y="401">S</text></g>
        <g class="area-name"><text x="1320" y="1260" fill="#79647c">Trelleborgs</text><text x="1320" y="1289" fill="#79647c">Hamn</text><text x="2395" y="1426" fill="#777">Dalköpinge</text></g>
        <g class="street"><text><textPath href="#ringPath">Västra Ringvägen</textPath></text>
          <text transform="translate(590 841) rotate(-19)">Hedvägen</text><text transform="translate(895 883) rotate(19)">Hedvägen</text><text transform="translate(1190 965) rotate(3)">Hedvägen</text>
          <text transform="translate(1540 397) rotate(-53)">Lundavägen</text><text transform="translate(1700 76) rotate(-77)">Lundavägen</text>
          <text transform="translate(1292 1169) rotate(7)">Strandgatan</text><text transform="translate(1785 1156) rotate(9)">Engelbrektsgatan</text><text transform="translate(1668 1277) rotate(2)">Östra Infarten</text><text transform="translate(1974 1293) rotate(9)">Östra Infarten</text><text transform="translate(2372 1362) rotate(23)">Östra Infarten</text><text transform="translate(2290 1052) rotate(-7)">Dalköpinge byaväg</text><text transform="translate(2501 1030) rotate(-3)">Gislövs byaväg</text></g>
        <!-- location pin -->
        <path fill="#d02b50" d="M1387 704C1407 704 1421 718 1421 738C1421 758 1399 784 1387 795C1375 784 1353 758 1353 738C1353 718 1367 704 1387 704z"/><circle cx="1387" cy="740" r="13" fill="#fff"/>
      </svg>

      <div class="info">
        <div class="col">
          <h3><span>Schedule</span></h3>
          <dl class="card single"><div class="row"><dt>Arrival</dt><dd class="date">August 15, 2025</dd></div></dl>
          <dl class="card trip">
            <div class="row first"><dt>Departure</dt><dd class="date">August 16, 2025 - 11:00</dd></div>
            <div class="row"><dt class="link">Ferry</dt><dd class="route">Trelleborg <svg viewBox="0 0 20 14" width="20" height="14" fill="none" stroke="#6b6b6b" stroke-width="1.600" stroke-linecap="round" stroke-linejoin="round"><path d="M1 7h18M13 1l6 6-6 6"/></svg> Rostock</dd></div>
            <div class="row"><dt>Operator</dt><dd class="operator">Stena Line</dd></div>
            <div class="row"><dt>Boarding</dt><dd class="time">13:15</dd></div>
            <div class="row"><dt>Duration</dt><dd>6h 30m</dd></div>
            <div class="row"><dt>Reference</dt><dd>ttline.com/en/germany-ferrie...</dd></div>
          </dl>
        </div>
        <div class="col">
          <h3><span>Accommodation</span><span class="status"><i class="dot green"></i>Booked</span></h3>
          <dl class="card single stay-ref"><div class="row"><dt>Reference</dt><dd>booking.com/city/se/trellebo...</dd></div></dl>
          <dl class="card stay">
            <div class="row first"><dt>Check in</dt><dd class="date">August 15, 2025 - 18:00</dd></div>
            <div class="row"><dt>Check out</dt><dd class="date">August 16, 2025 - 11:00</dd></div>
          </dl>
        </div>
      </div>
    </section>
  </main>
</div>
</body>
</html>
```
FILE: styles.css
```css
* { box-sizing: border-box; }
body { margin: 0; background: #fff; color: #111; font-family: Inter, "Liberation Sans", sans-serif; font-size: 19.2px; }
svg { display: block; flex: none; }
h1, h2, h3, dl, dd { margin: 0; font-weight: 500; }
.page { width: 1196px; height: 1263px; margin-left: 325.4px; }

.topbar { height: 76px; display: flex; align-items: center; justify-content: space-between; }
.logo { font-family: Lato, sans-serif; font-weight: 700; font-size: 26.5px; letter-spacing: 7.6px; line-height: 32px; padding-top: 3px; }
.nav { display: flex; align-items: center; gap: 27px; }
.avatar { position: relative; }
.badge { position: absolute; right: -2px; top: -2px; width: 15px; height: 15px; border-radius: 50%; background: #d02b50; color: #fff; font-size: 10px; line-height: 15px; text-align: center; }

.title-row { height: 50px; margin-top: 49.5px; display: grid; grid-template-columns: 24px 1fr 24px; align-items: center; }
.title-row h1 { font-size: 33.5px; text-align: center; line-height: 50px; padding-left: 1px; }
.back { margin-left: .6px; }

.tabs { margin-top: 25.5px; height: 46px; padding-left: 291px; display: flex; align-items: center; font-size: 17.4px; }
.tab { display: flex; align-items: center; height: 45px; gap: 9px; }
.t-overview { width: 125px; }
.t-waypoints { width: 148px; gap: 7px; padding-left: 21px; background: #2c2c2c; color: #fff; border-radius: 4px; }
.t-posts { width: 116px; margin-left: 22px; padding-top: 1px; }
.t-settings { width: 137px; padding-top: 1px; }
.t-budget { padding-top: 2px; }

.content { display: grid; grid-template-columns: 262px 902px; gap: 32px; margin-top: 54px; }
.side { display: flex; flex-direction: column; padding-top: 25px; }
.edit { color: #0d99ff; line-height: 32px; margin-bottom: 11px; }
.item { display: flex; align-items: center; height: 43px; margin-bottom: 9px; padding: 0 13px; border-radius: 4px; background: #f2f2f2; }
.item.active { background: #b0b0b0; margin-bottom: 11px; }
.item span { flex: 1; padding-left: 12px; }
.item svg { margin-right: -1px; fill: none; stroke: #111; stroke-width: 1.7; stroke-linecap: round; stroke-linejoin: round; }
.active svg { margin-top: 2px; }
.dot { display: block; width: 15px; height: 15px; border-radius: 50%; }
.indigo { background: #3f51b5; }
.amber { background: #ffc107; }
.purple { background: #9c27b0; }
.sky { background: #03a9f4; }
.green { background: #4caf50; }
.new { display: flex; align-items: center; height: 44px; padding: 0 0 4px 50px; gap: 12px; background: #1976d2; color: #fff; border-radius: 4px; }

.place { height: 50px; display: flex; align-items: center; padding-left: 262px; }
.pill { width: 101px; height: 24px; border-radius: 12px; background: #3f51b5; color: #fff; font-size: 14.5px; line-height: 24px; text-align: center; }
.place h2 { font-size: 28.6px; width: 160px; padding-left: 18px; margin-right: 19px; white-space: nowrap; }
.map { width: 902px; height: 488px; margin-top: 18px; font-family: "Noto Sans", sans-serif; }
.shield text { font-size: 25px; text-anchor: middle; fill: #4c4c4c; }
.sh-w rect { fill: #f0f0f0; stroke: #cbcbcb; stroke-width: 3; }
.sh-y rect { fill: #f2f3d3; stroke: #c4c795; stroke-width: 3; }
.place-name text { font-size: 26px; text-anchor: middle; fill: #333; stroke: #fff; stroke-opacity: .7; stroke-width: 4; paint-order: stroke; }
.place-name .town { font-size: 30px; }
.junction text, .area-name text { font-size: 24px; font-style: italic; text-anchor: middle; stroke: #fff; stroke-opacity: .7; stroke-width: 4; paint-order: stroke; }
.junction text { fill: #a8243c; }
.street text { font-size: 20px; fill: #333; }

.info { display: grid; grid-template-columns: 434px 433px; gap: 35px; margin-top: 32.5px; }
.col h3 { display: flex; justify-content: space-between; font-size: 19.2px; line-height: 32px; height: 34.5px; }
.status { display: flex; align-items: center; gap: 7px; height: 32px; padding-right: 1px; }
.card { border-radius: 4px; background: #f2f2f2; }
.row { display: flex; justify-content: space-between; line-height: 33.700px; padding: 0 14.500px 0 16px; }
dt { font-weight: 400; }
dd { color: #6b6b6b; font-weight: 400; }
.link { color: #5ba4ff; }
.date { letter-spacing: .1px; }
.operator { margin-right: -1px; }
.time { letter-spacing: .4px; }
.single { height: 50px; padding-top: 9px; }
.trip { height: 239px; margin-top: 15px; }
.trip .first, .stay .first { padding-left: 0; margin-left: 16px; border-bottom: 2px solid #e6e6e6; }
.trip .first { height: 53px; padding-top: 10px; margin-bottom: 9.500px; }
.route { display: flex; align-items: center; gap: 7px; }
.stay-ref .row { padding: 0 16px 0 17px; }
.stay { height: 105px; margin: 19px 4px 0 -4px; }
.stay .row { padding: 0 12px 0 21px; }
.stay .first { height: 51px; margin: 0 -4px 6px 21px; padding: 7px 16px 0 0; }
```
